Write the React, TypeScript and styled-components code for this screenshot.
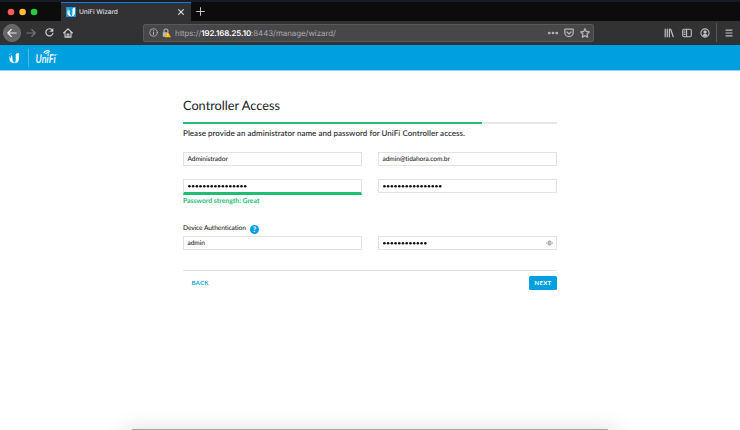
import React from "react";
import styled, { createGlobalStyle } from "styled-components";

const Global = createGlobalStyle`
  * { box-sizing: border-box; }
  body { margin: 0; background: #fff; overflow: hidden; font-family: Lato, sans-serif; text-rendering: geometricPrecision; }
`;

const Window = styled.div`
  width: 740px; height: 430px; display: flex; flex-direction: column;
  background: #fff; overflow: hidden;
`;
const TabStrip = styled.div`
  height: 21px; flex: none; display: flex; align-items: stretch;
  background: #0c0c0d; border-top: 2px solid #181b24;
`;
const Lights = styled.div`
  width: 61px; display: flex; align-items: center; padding-left: 7px;
`;
const Tab = styled.div`
  width: 130px; display: flex; align-items: center; padding: 0 7px 0 5px;
  background: #323234; border-top: 1px solid #0a7cf0; color: #dedee0;
  font: 500 6.6px/10px Inter, sans-serif; letter-spacing: -.1px;
`;
const Favicon = styled.span`
  width: 10px; height: 10px; margin-right: 3px; display: block; flex: none; background: #129bdc;
  svg { display: block; margin: 0; }
`;
const TabTitle = styled.span`flex: 1; white-space: nowrap;`;
const NewTab = styled.div`display: flex; align-items: center; padding-left: 5px; color: #c4c4c6;`;
const Toolbar = styled.div`
  height: 24px; flex: none; display: flex; align-items: center; padding: 0 7px 0 3px;
  background: #323234; border-bottom: 1px solid #24333d; color: #c0c0c2;
  svg { display: block; flex: none; }
`;
const BackButton = styled.span`
  width: 18px; height: 18px; margin-right: 5px; border-radius: 50%; display: grid; place-items: center;
  background: #666668; border: 1px solid #727274; color: #eee;
`;
const NavIcons = styled.div`display: flex; align-items: center; gap: 9px; width: 117px; color: #d2d2d4;`;
const Dim = styled.span`color: #78787a;`;
const AddressBar = styled.div`
  width: 451px; height: 18px; display: flex; align-items: center; padding: 0 3px 0 5px;
  background: #474749; border: 1px solid #59595b; border-radius: 2px; color: #b5b5b7;
`;
const Url = styled.span`
  flex: 1; padding-left: 4px; font: 400 7.9px/12px Inter, sans-serif; letter-spacing: -.03px; white-space: nowrap;
  color: #adadaf;
  b { color: #fff; font-weight: 600; letter-spacing: -.1px; }
`;
const Actions = styled.div<{ $gap: number }>`display: flex; align-items: center; gap: ${p => p.$gap}px;`;
const BrowserTools = styled(Actions)`margin-left: auto;`;
const Divider = styled.i<{ $color: string; $height: number }>`
  width: 1px; height: ${p => p.$height}px; background: ${p => p.$color};
`;
const Brand = styled.header`
  height: 26px; flex: none; display: flex; align-items: center; padding: 0 0 0 8px;
  background: #009fe0; border-bottom: 1px solid #8dd5f2;
`;
const Wordmark = styled.svg`margin-left: 6px; overflow: visible;`;
const Mark = styled.svg`margin-right: 8px; flex: none;`;
const Wizard = styled.main`
  width: 374px; margin: 25px 0 0 183px; flex: 1; color: #222427;
`;
const Title = styled.h1`
  margin: 0; height: 26px; font-size: 12.75px; line-height: 18px; font-weight: 400; color: #202124;
`;
const Progress = styled.div`height: 2px; background: #e5e7e8;`;
const ProgressValue = styled.div`width: 298.5px; height: 2px; background: #20bd73;`;
const Intro = styled.p`
  margin: 3px 0 12px; height: 13px; font-size: 7.95px; line-height: 13px; font-weight: 600; letter-spacing: .052px; color: #303236; white-space: nowrap;
`;
const Fields = styled.div<{ $gap: number }>`
  display: grid; grid-template-columns: 179px 179px; justify-content: space-between; align-items: start; margin-bottom: ${p => p.$gap}px;
`;
const Field = styled.div<{ $strong?: boolean }>`
  height: ${p => (p.$strong ? 16 : 14)}px; display: flex; align-items: center; justify-content: space-between;
  padding: 0 3px 0 3.5px; border: 1px solid #e1e2e3; font-size: 6.6px; line-height: 12px; font-weight: 500;
  letter-spacing: -.08px;
  ${p => p.$strong && "border-bottom: 3px solid #20bd73;"}
`;
const Strength = styled.div`
  height: 10px; padding-top: 1px; font-size: 6.8px; line-height: 10px; font-weight: 700; color: #20bd73; white-space: nowrap;
`;
const Label = styled.div`
  height: 13px; display: flex; align-items: center; gap: 4px; font-size: 6.6px; line-height: 10px; font-weight: 500;
  letter-spacing: -.08px; margin-top: 18px;
`;
const LabelText = styled.span`margin-top: -4px;`;
const Help = styled.span`
  width: 9px; height: 9px; border-radius: 50%; display: grid; place-items: center;
  background: #009fe0; color: #fff; font-size: 7.5px; line-height: 9px; font-weight: 700;
`;
const Footer = styled.footer`
  border-top: 1px solid #e0e2e3; margin-top: 20px; padding: 5px 0 0 8px; display: flex; justify-content: space-between;
`;
const Button = styled.button<{ $primary?: boolean }>`
  width: ${p => (p.$primary ? 28 : 18)}px; height: 14px; border: 0; border-radius: 1.5px; padding: 0;
  display: grid; place-items: center; background: ${p => (p.$primary ? "#009fe0" : "transparent")};
  color: ${p => (p.$primary ? "#fff" : "#159fd9")}; font: 700 6.2px/14px Lato, sans-serif; letter-spacing: .15px;
`;
const BottomShadow = styled.div`
  width: 476px; height: 1px; flex: none; margin-left: 132px; background: #a7a7a7;
  box-shadow: 0 10px 22px 8px rgba(0,0,0,.17);
`;

const Icon = ({ size = 10, children }: { size?: number; children: React.ReactNode }) => (
  <svg width={size} height={size} viewBox="0 0 10 10" fill="none" stroke="currentColor" strokeWidth="1.1" strokeLinecap="round" strokeLinejoin="round">{children}</svg>
);

const UMark = ({ size }: { size: number }) => (
  <Mark width={size} height={size} viewBox="0 0 12 12" fill="#fff">
    <path d="M4.4 2v4.8c0 2 .7 3.3 3 4.3C3.5 11.3 1.5 9.7 1.5 7V4.3h.7v2h.7V3h.6v1h.9zM7.7 2.8C7.7 1.8 8.7 1 10.9 1v5.7c0 2.8-1.2 4.3-4.2 4.4.8-1 1-2 1-3.4z" />
    <path d="M1.4 2h.7v.7h-.7zM2.7 1h.6v.7h-.6z" />
  </Mark>
);

const Masked = ({ count }: { count: number }) => (
  <svg width={count * 3.72} height="6" viewBox={`0 0 ${count * 3.72} 6`} fill="#111">
    {Array.from({ length: count }, (_, i) => <circle key={i} cx={1.4 + i * 3.72} cy="3.2" r="1.3" />)}
  </svg>
);

export default function App() {
  return (
    <Window>
      <Global />
      <TabStrip>
        <Lights>
          <svg width="34" height="8"><circle cx="4" cy="4" r="3.3" fill="#ff5b52" /><circle cx="15.6" cy="4" r="3.3" fill="#ffbd2e" /><circle cx="27.1" cy="4" r="3.3" fill="#27c93f" /></svg>
        </Lights>
        <Tab>
          <Favicon><UMark size={10} /></Favicon><TabTitle>UniFi Wizard</TabTitle>
          <Icon size={6}><path d="m1 1 8 8M9 1 1 9" strokeWidth="1.8" /></Icon>
        </Tab>
        <NewTab><Icon size={9}><path d="M5 .7v8.6M.7 5h8.6" /></Icon></NewTab>
      </TabStrip>
      <Toolbar>
        <BackButton><Icon size={10}><path d="M9.2 5H.9M4.3 1.5.8 5l3.5 3.5" /></Icon></BackButton>
        <NavIcons>
          <Dim><Icon><path d="M.8 5h8.3M5.7 1.5 9.2 5 5.7 8.5" /></Icon></Dim>
          <Icon size={9}><path d="M8.8 6A4 4 0 1 1 8 2.2" strokeWidth="1.3" /><path d="M9 .7v3.4H5.6z" fill="currentColor" strokeWidth=".4" /></Icon>
          <Icon size={10}><path d="M.6 5 5 .8 9.4 5M2 4.5v4.6h6V4.5M4.1 9V6h1.8v3" /></Icon>
        </NavIcons>
        <AddressBar>
          <Actions $gap={4}>
            <Icon size={9}><circle cx="5" cy="5" r="4.2" strokeWidth=".9" /><path d="M5 4.5v2.7M5 2.6v.1" /></Icon>
            <svg width="9" height="10" viewBox="0 0 9 10"><path d="M2 5V3a2 2 0 0 1 4 0v1" fill="none" stroke="#b8b8ba" strokeWidth="1.1" /><path d="M.8 4.2h4.6L4 8.8H.8z" fill="#b8b8ba" /><path d="M5.8 3.5 9 9.2H2.6z" fill="#ffb500" /><path d="M5.8 5.5v1.7m0 .8v.5" stroke="#fff" strokeWidth=".8" /></svg>
          </Actions>
          <Url>https://<b>192.168.25.10</b>:8443/manage/wizard/</Url>
          <Actions $gap={6}>
            <Icon><circle cx="1.3" cy="5" r=".8" fill="currentColor" /><circle cx="5" cy="5" r=".8" fill="currentColor" /><circle cx="8.7" cy="5" r=".8" fill="currentColor" /></Icon>
            <Icon><path d="M.8 1.2h8.4v3.2a4.2 4.2 0 0 1-8.4 0zM3 4l2 2 2-2" strokeWidth="1.3" /></Icon>
            <Icon><path d="m5 .7 1.3 2.8 3 .4-2.2 2.2.5 3.1L5 7.7 2.4 9.2l.5-3.1L.7 3.9l3-.4z" strokeWidth="1.3" /></Icon>
          </Actions>
        </AddressBar>
        <BrowserTools $gap={8}>
          <Icon><path d="M1.2 1.2v7.6M3.3 1.2v7.6M5.4 1.2v7.6M6.7 1.2l2.5 7.6" strokeWidth="1.2" /></Icon>
          <Icon><rect x=".7" y="1.2" width="8.6" height="7.5" rx="1.4" /><path d="M4.6 1.5v7M2.1 3h1M2.1 4.8h1M2.1 6.5h1" /></Icon>
          <Actions $gap={6}>
            <Icon><circle cx="5" cy="5" r="4.1" /><circle cx="5" cy="3.9" r="1.5" fill="currentColor" strokeWidth=".3" /><path d="M2.5 7.4C3.8 5.6 6.2 5.6 7.5 7.4L5 8.5z" fill="currentColor" strokeWidth=".4" /></Icon>
            <Divider $color="#58585a" $height={19} />
          </Actions>
          <Icon size={8}><path d="M.7 1.4h8.6M.7 5h8.6M.7 8.6h8.6" strokeWidth="1.3" strokeLinecap="butt" /></Icon>
        </BrowserTools>
      </Toolbar>
      <Brand>
        <UMark size={12} /><Divider $color="#47b9e7" $height={18} />
        <Wordmark width="25" height="16" viewBox="0 0 25 16">
          <text x=".6" y="12.6" fill="#fff" fontFamily="Lato" fontSize="12" fontStyle="italic" fontWeight="600" textLength="20" lengthAdjust="spacingAndGlyphs">UniFi</text>
          <path d="M20.8 4.6h2" stroke="#b9e5f7" strokeWidth=".6" />
          <path d="M8.6 3.2c1.6-3.1 4.6-3.2 6.2-1.3M10.5 4.1c.9-1.7 2.3-1.8 3.5-.8" fill="none" stroke="#fff" strokeWidth="1.1" />
        </Wordmark>
      </Brand>
      <Wizard>
        <Title>Controller Access</Title>
        <Progress><ProgressValue /></Progress>
        <Intro>Please provide an administrator name and password for UniFi Controller access.</Intro>
        <Fields $gap={13}><Field>Administrador</Field><Field>admin@tidahora.com.br</Field></Fields>
        <Fields $gap={0}><Field $strong><Masked count={16} /></Field><Field><Masked count={16} /></Field></Fields>
        <Strength>Password strength: Great</Strength>
        <Label><LabelText>Device Authentication</LabelText><Help>?</Help></Label>
        <Fields $gap={0}>
          <Field>admin</Field>
          <Field><Masked count={12} /><svg width="7" height="6" viewBox="0 0 7 6" fill="none" stroke="#858b90" strokeWidth=".8"><path d="M.5 3Q3.5-1 6.5 3 3.5 7 .5 3z" /><circle cx="3.5" cy="3" r="1" /></svg></Field>
        </Fields>
        <Footer><Button>BACK</Button><Button $primary>NEXT</Button></Footer>
      </Wizard>
      <BottomShadow />
    </Window>
  );
}
